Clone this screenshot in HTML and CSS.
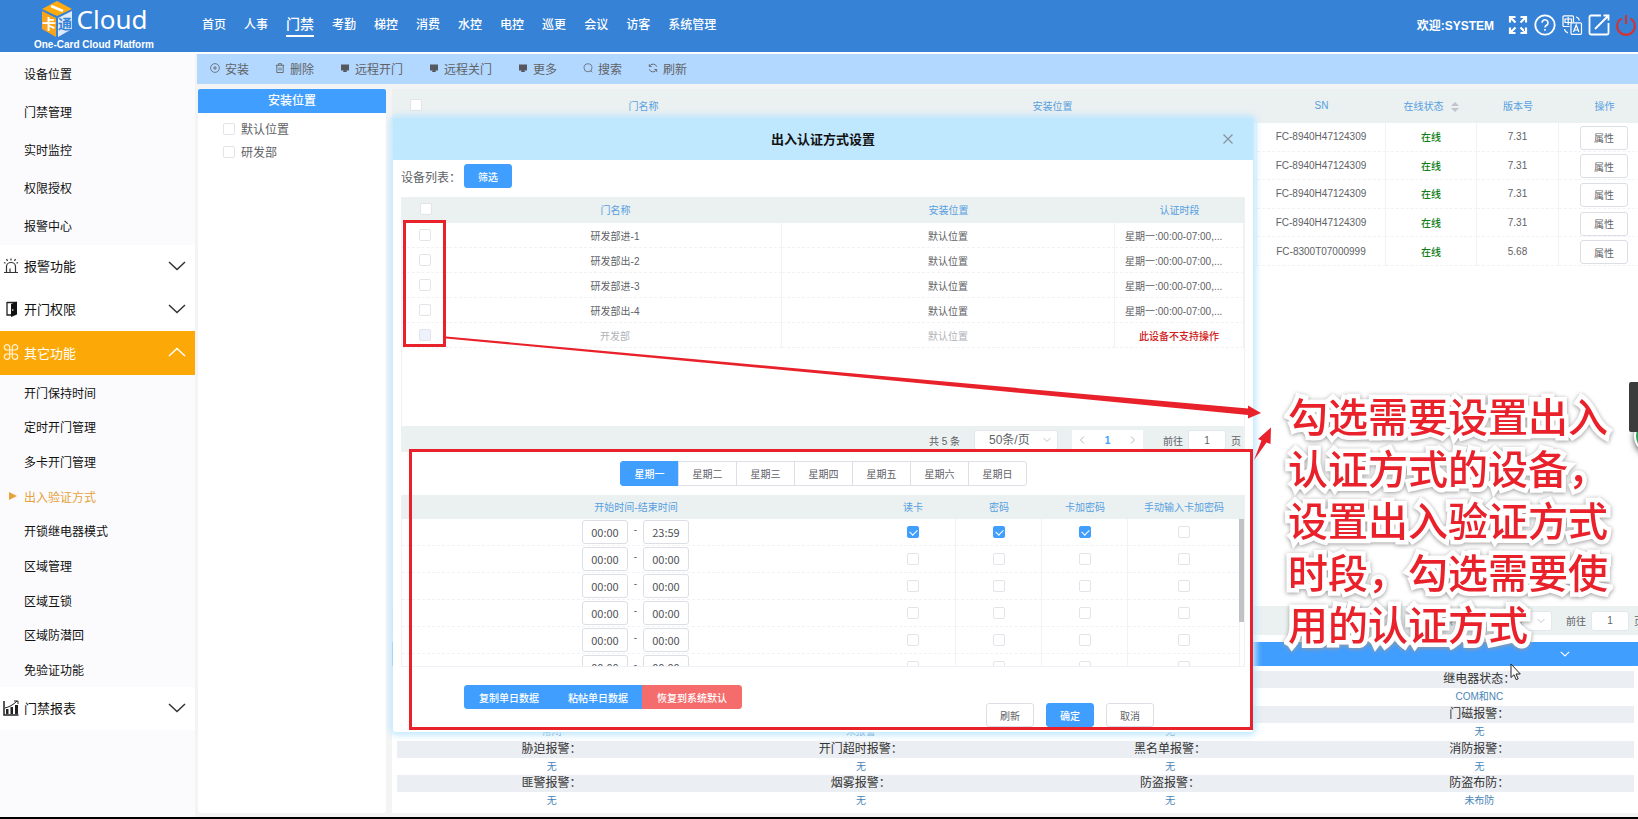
FILE: index.html
```html
<!DOCTYPE html>
<html lang="zh-CN">
<head>
    <meta charset="utf-8">
    <title>One-Card Cloud Platform</title>
    <link rel="stylesheet" href="styles.css">
</head>
<body>
    <header class="header">
        <div class="logo">
            <div class="logo-top">
                <svg width="32" height="36" viewBox="0 0 32 36">
                    <polygon points="1,8 16,0 31,8 16,15" fill="#ffab0f"/>
                    <polygon points="1,10 15,17 15,36 1,28" fill="#f9a41a"/>
                    <polygon points="17,17 31,10 31,28 17,36" fill="#dcebfb"/>
                    <path d="M10 5L22 10" stroke="#fff" stroke-width="2.500"/>
                    <text x="1" y="28" font-size="14" font-weight="700" fill="#fff">卡</text>
                    <text x="17" y="28" font-size="14" font-weight="700" fill="#3682d6">通</text>
                </svg>
                <span class="logo-name">Cloud</span>
            </div>
            <div class="logo-sub">One-Card Cloud Platform</div>
        </div>
        <nav class="nav">
            <a href="#">首页</a>
            <a href="#">人事</a>
            <a href="#" class="active">门禁</a>
            <a href="#">考勤</a>
            <a href="#">梯控</a>
            <a href="#">消费</a>
            <a href="#">水控</a>
            <a href="#">电控</a>
            <a href="#">巡更</a>
            <a href="#">会议</a>
            <a href="#">访客</a>
            <a href="#">系统管理</a>
        </nav>
        <div class="user">
            <span class="welcome">欢迎:SYSTEM</span>
            <button class="icon-btn" aria-label="全屏">
                <svg width="22" height="22" viewBox="0 0 22 22" fill="none" stroke="#fff" stroke-width="2.200">
                    <path d="M3 8.500V3h5.500M3.500 3.500l5 5M13.500 3H19v5.500M18.500 3.500l-5 5M3 13.500V19h5.500M3.500 18.500l5-5M19 13.500V19h-5.500M18.500 18.500l-5-5"/>
                </svg>
            </button>
            <button class="icon-btn" aria-label="帮助">
                <svg width="22" height="22" viewBox="0 0 22 22" fill="none" stroke="#fff" stroke-width="1.800">
                    <circle cx="11" cy="11" r="9.700"/>
                    <path d="M8 8.800a3 3 0 1 1 4.600 2.500c-1.100.7-1.600 1.100-1.600 2.200M11 15v1.800" stroke-width="1.600"/>
                </svg>
            </button>
            <button class="icon-btn" aria-label="语言">
                <svg width="22" height="22" viewBox="0 0 22 22" fill="none" stroke="#fff" stroke-width="1.200">
                    <path d="M8.500 12.500H3a1 1 0 0 1-1-1V2.800a1 1 0 0 1 1-1h8.500a1 1 0 0 1 1 1V8M4 5h6.500v3.500H4zM7.200 3v8M10 8.800h9.500a1 1 0 0 1 1 1v9.500a1 1 0 0 1-1 1H11a1 1 0 0 1-1-1zM12.500 18l2.700-7 2.700 7M13.300 16h3.800M15 3c2 .3 3 1.300 3.300 3.500M3.500 15c.3 2 1.300 3.300 3.500 3.800"/>
                </svg>
            </button>
            <button class="icon-btn" aria-label="编辑">
                <svg width="22" height="22" viewBox="0 0 22 22" fill="none" stroke="#fff" stroke-width="1.800">
                    <path d="M13 1.500H3a1.500 1.500 0 0 0-1.500 1.500v16A1.500 1.500 0 0 0 3 20.500h16a1.500 1.500 0 0 0 1.500-1.500V9M7 15L20 2M15.500 1.500h5V6.500"/>
                </svg>
            </button>
            <button class="icon-btn" aria-label="退出">
                <svg width="22" height="22" viewBox="0 0 22 22" fill="none" stroke="#d9302c" stroke-width="2">
                    <path d="M6.500 4.500a8.800 8.800 0 1 0 9 0M11 1v9"/>
                </svg>
            </button>
        </div>
    </header>

    <div class="main">
        <aside class="sidebar">
            <ul class="menu">
                <li><a href="#">设备位置</a></li>
                <li><a href="#">门禁管理</a></li>
                <li><a href="#">实时监控</a></li>
                <li><a href="#">权限授权</a></li>
                <li><a href="#">报警中心</a></li>
            </ul>
            <button class="group">
                <svg width="16" height="16" viewBox="0 0 16 16" fill="none" stroke="#333" stroke-width="1.200">
                    <path d="M1 14.500h14M3.500 14V8.500a4.500 4 0 0 1 9 0V14M7 14v-3.500M8 .5v2M3.500 1l1 2M12.500 1l-1 2M1 4.500l1.500.8M15 4.500l-1.500.8"/>
                </svg>
                <span>报警功能</span>
                <svg class="arrow" width="18" height="10" viewBox="0 0 18 10"><path d="M1 1l8 7.500L17 1"/></svg>
            </button>
            <button class="group">
                <svg width="16" height="16" viewBox="0 0 16 16">
                    <path d="M4 1.500h9M4 1v13h4" fill="none" stroke="#222" stroke-width="1.300"/>
                    <path d="M8 3l6-2.500v13L8 16z" fill="#111"/>
                    <circle cx="9.700" cy="9" r=".8" fill="#fff"/>
                </svg>
                <span>开门权限</span>
                <svg class="arrow" width="18" height="10" viewBox="0 0 18 10"><path d="M1 1l8 7.500L17 1"/></svg>
            </button>
            <button class="group open">
                <svg width="16" height="16" viewBox="0 0 16 16" fill="none" stroke="#fff3d6" stroke-width="1.200">
                    <path d="M6 6H4a2.700 2.700 0 1 1 2.700-2.700v9.400A2.700 2.700 0 1 1 4 10h8a2.700 2.700 0 1 1-2.700 2.700V3.300A2.700 2.700 0 1 1 12 6H6"/>
                </svg>
                <span>其它功能</span>
                <svg class="arrow" width="18" height="10" viewBox="0 0 18 10"><path d="M1 9l8-7.500L17 9"/></svg>
            </button>
            <ul class="menu submenu">
                <li><a href="#">开门保持时间</a></li>
                <li><a href="#">定时开门管理</a></li>
                <li><a href="#">多卡开门管理</a></li>
                <li><a href="#" class="current">出入验证方式</a></li>
                <li><a href="#">开锁继电器模式</a></li>
                <li><a href="#">区域管理</a></li>
                <li><a href="#">区域互锁</a></li>
                <li><a href="#">区域防潜回</a></li>
                <li><a href="#">免验证功能</a></li>
            </ul>
            <button class="group">
                <svg width="16" height="16" viewBox="0 0 16 16">
                    <path d="M1 1v14h14.500" fill="none" stroke="#222" stroke-width="1.500"/>
                    <path d="M3 9h2.500v5H3zM7.500 7H10v7H7.500zM12 5h3v9h-3z" fill="#222"/>
                    <path d="M2 8C6 7 10 5 14 1M11 1h4v3" fill="none" stroke="#222"/>
                </svg>
                <span>门禁报表</span>
                <svg class="arrow" width="18" height="10" viewBox="0 0 18 10"><path d="M1 1l8 7.500L17 1"/></svg>
            </button>
        </aside>

        <div class="content">
            <div class="toolbar">
                <button>
                    <svg width="10" height="10" viewBox="0 0 10 10" fill="none" stroke="#606266" stroke-width=".8"><circle cx="5" cy="5" r="4.400"/><path d="M5 3v4M3 5h4"/></svg>
                    安装
                </button>
                <button>
                    <svg width="10" height="10" viewBox="0 0 10 10" fill="none" stroke="#606266" stroke-width=".9"><path d="M.8 2.300h8.400M3.500 2V.7h3V2M1.800 2.500v7h6.400v-7M4 4.500v3M6 4.500v3"/></svg>
                    删除
                </button>
                <button>
                    <svg width="10" height="10" viewBox="0 0 10 10" fill="#55585e"><path d="M1 1.500h8v6H6.300L7 9H3l.7-1.500H1z"/></svg>
                    远程开门
                </button>
                <button>
                    <svg width="10" height="10" viewBox="0 0 10 10" fill="#55585e"><path d="M1 1.500h8v6H6.300L7 9H3l.7-1.500H1z"/></svg>
                    远程关门
                </button>
                <button>
                    <svg width="10" height="10" viewBox="0 0 10 10" fill="#55585e"><path d="M1 1.500h8v6H6.300L7 9H3l.7-1.500H1z"/></svg>
                    更多
                </button>
                <button>
                    <svg width="10" height="10" viewBox="0 0 10 10" fill="none" stroke="#606266" stroke-width=".8"><circle cx="5" cy="4.800" r="4"/><path d="M7.800 7.800l1.500 1.500"/></svg>
                    搜索
                </button>
                <button>
                    <svg width="10" height="10" viewBox="0 0 10 10" fill="none" stroke="#606266" stroke-width=".9"><path d="M1.300 6.300A3.900 3.900 0 0 0 8.500 6.700M8.700 3.700A3.900 3.900 0 0 0 1.500 3.300M1.300 1.200v2.300h2.300M8.700 8.800V6.500H6.400"/></svg>
                    刷新
                </button>
            </div>

            <div class="panels">
                <section class="tree">
                    <h2>安装位置</h2>
                    <label><input type="checkbox" class="check">默认位置</label>
                    <label><input type="checkbox" class="check">研发部</label>
                </section>

                <section class="devices">
                    <div class="device-list">
                        <table class="grid device-table">
                            <colgroup>
                                <col class="w-check"><col><col><col class="w-sn"><col class="w-state"><col class="w-version"><col class="w-action">
                            </colgroup>
                            <thead>
                                <tr>
                                    <th><input type="checkbox" class="check" aria-label="全选"></th>
                                    <th>门名称</th>
                                    <th>安装位置</th>
                                    <th>SN</th>
                                    <th>在线状态
                                        <svg class="sort" width="8" height="10" viewBox="0 0 8 10" fill="#c0c4cc"><path d="M4 0l4 4H0zM4 10l4-4H0z"/></svg>
                                    </th>
                                    <th>版本号</th>
                                    <th>操作</th>
                                </tr>
                            </thead>
                            <tbody>
                                <tr>
                                    <td><input type="checkbox" class="check" aria-label="选择"></td><td>研发部进-1</td><td>默认位置</td>
                                    <td>FC-8940H47124309</td><td class="online">在线</td><td>7.31</td><td><button class="btn">属性</button></td>
                                </tr>
                                <tr>
                                    <td><input type="checkbox" class="check" aria-label="选择"></td><td>研发部出-2</td><td>默认位置</td>
                                    <td>FC-8940H47124309</td><td class="online">在线</td><td>7.31</td><td><button class="btn">属性</button></td>
                                </tr>
                                <tr>
                                    <td><input type="checkbox" class="check" aria-label="选择"></td><td>研发部进-3</td><td>默认位置</td>
                                    <td>FC-8940H47124309</td><td class="online">在线</td><td>7.31</td><td><button class="btn">属性</button></td>
                                </tr>
                                <tr>
                                    <td><input type="checkbox" class="check" aria-label="选择"></td><td>研发部出-4</td><td>默认位置</td>
                                    <td>FC-8940H47124309</td><td class="online">在线</td><td>7.31</td><td><button class="btn">属性</button></td>
                                </tr>
                                <tr>
                                    <td><input type="checkbox" class="check" aria-label="选择"></td><td>开发部</td><td>默认位置</td>
                                    <td>FC-8300T07000999</td><td class="online">在线</td><td>5.68</td><td><button class="btn">属性</button></td>
                                </tr>
                            </tbody>
                        </table>
                    </div>

                    <div class="pagination">
                        <span>共 5 条</span>
                        <select class="page-size" aria-label="每页条数"><option>50条/页</option></select>
                        <label>前往<input type="text" class="page-input" value="1">页</label>
                    </div>

                    <div class="detail-bar">
                        <svg width="10" height="6" viewBox="0 0 10 6" fill="none" stroke="#fff" stroke-width="1.200"><path d="M.8.8L5 5 9.200.8"/></svg>
                    </div>
                    <dl class="detail">
                        <div><dt>门状态：</dt><dd>关闭</dd></div>
                        <div><dt>门锁状态：</dt><dd>未锁定</dd></div>
                        <div><dt>远程锁定：</dt><dd>无</dd></div>
                        <div><dt>继电器状态：</dt><dd>COM和NC</dd></div>
                        <div><dt>门控状态：</dt><dd>常闭</dd></div>
                        <div><dt>非法刷卡：</dt><dd>未报警</dd></div>
                        <div><dt>读卡报警：</dt><dd>无</dd></div>
                        <div><dt>门磁报警：</dt><dd>无</dd></div>
                        <div><dt>胁迫报警：</dt><dd>无</dd></div>
                        <div><dt>开门超时报警：</dt><dd>无</dd></div>
                        <div><dt>黑名单报警：</dt><dd>无</dd></div>
                        <div><dt>消防报警：</dt><dd>无</dd></div>
                        <div><dt>匪警报警：</dt><dd>无</dd></div>
                        <div><dt>烟雾报警：</dt><dd>无</dd></div>
                        <div><dt>防盗报警：</dt><dd>无</dd></div>
                        <div><dt>防盗布防：</dt><dd>未布防</dd></div>
                    </dl>
                </section>
            </div>
        </div>
    </div>
    <div class="bottom-strip"></div>

    <div class="modal" role="dialog" aria-labelledby="modal-title">
        <div class="modal-header">
            <h1 id="modal-title">出入认证方式设置</h1>
            <button class="close" aria-label="关闭">
                <svg width="10" height="10" viewBox="0 0 10 10" stroke="#8a9299" stroke-width="1.200"><path d="M.5.5l9 9M9.500.5l-9 9"/></svg>
            </button>
        </div>
        <div class="modal-body">
            <div class="filter">
                <span>设备列表：</span>
                <button class="btn primary">筛选</button>
            </div>
            <div class="door-list">
                <table class="grid door-table">
                    <colgroup><col class="w-check"><col><col><col class="w-period"></colgroup>
                    <thead>
                        <tr>
                            <th><input type="checkbox" class="check" aria-label="全选"></th>
                            <th>门名称</th><th>安装位置</th><th>认证时段</th>
                        </tr>
                    </thead>
                    <tbody>
                        <tr><td><input type="checkbox" class="check" aria-label="研发部进-1"></td><td>研发部进-1</td><td>默认位置</td><td class="period">星期一:00:00-07:00,...</td></tr>
                        <tr><td><input type="checkbox" class="check" aria-label="研发部出-2"></td><td>研发部出-2</td><td>默认位置</td><td class="period">星期一:00:00-07:00,...</td></tr>
                        <tr><td><input type="checkbox" class="check" aria-label="研发部进-3"></td><td>研发部进-3</td><td>默认位置</td><td class="period">星期一:00:00-07:00,...</td></tr>
                        <tr><td><input type="checkbox" class="check" aria-label="研发部出-4"></td><td>研发部出-4</td><td>默认位置</td><td class="period">星期一:00:00-07:00,...</td></tr>
                        <tr class="disabled"><td><input type="checkbox" class="check" aria-label="开发部" disabled></td><td>开发部</td><td>默认位置</td><td class="unsupported">此设备不支持操作</td></tr>
                    </tbody>
                </table>
            </div>
            <div class="pagination">
                <span>共 5 条</span>
                <select class="page-size" aria-label="每页条数"><option>50条/页</option></select>
                <div class="pager">
                    <button aria-label="上一页"><svg width="6" height="8" viewBox="0 0 6 8"><path d="M5 .5L1.500 4 5 7.500"/></svg></button>
                    <button class="page-on">1</button>
                    <button aria-label="下一页"><svg width="6" height="8" viewBox="0 0 6 8"><path d="M1 .5L4.500 4 1 7.500"/></svg></button>
                </div>
                <label>前往<input type="text" class="page-input" value="1">页</label>
            </div>

            <div class="weekdays">
                <button class="on">星期一</button>
                <button>星期二</button>
                <button>星期三</button>
                <button>星期四</button>
                <button>星期五</button>
                <button>星期六</button>
                <button>星期日</button>
            </div>

            <div class="time-list">
                <table class="grid time-table">
                    <colgroup><col><col class="w-mode"><col class="w-mode"><col class="w-mode"><col class="w-manual"></colgroup>
                    <thead>
                        <tr><th>开始时间-结束时间</th><th>读卡</th><th>密码</th><th>卡加密码</th><th>手动输入卡加密码</th></tr>
                    </thead>
                    <tbody>
                        <tr>
                            <td><input class="time" value="00:00" aria-label="开始时间"><span class="dash">-</span><input class="time" value="23:59" aria-label="结束时间"></td>
                            <td><input type="checkbox" class="check" aria-label="读卡" checked></td>
                            <td><input type="checkbox" class="check" aria-label="密码" checked></td>
                            <td><input type="checkbox" class="check" aria-label="卡加密码" checked></td>
                            <td><input type="checkbox" class="check" aria-label="手动输入卡加密码"></td>
                        </tr>
                        <tr>
                            <td><input class="time" value="00:00" aria-label="开始时间"><span class="dash">-</span><input class="time" value="00:00" aria-label="结束时间"></td>
                            <td><input type="checkbox" class="check" aria-label="读卡"></td>
                            <td><input type="checkbox" class="check" aria-label="密码"></td>
                            <td><input type="checkbox" class="check" aria-label="卡加密码"></td>
                            <td><input type="checkbox" class="check" aria-label="手动输入卡加密码"></td>
                        </tr>
                        <tr>
                            <td><input class="time" value="00:00" aria-label="开始时间"><span class="dash">-</span><input class="time" value="00:00" aria-label="结束时间"></td>
                            <td><input type="checkbox" class="check" aria-label="读卡"></td>
                            <td><input type="checkbox" class="check" aria-label="密码"></td>
                            <td><input type="checkbox" class="check" aria-label="卡加密码"></td>
                            <td><input type="checkbox" class="check" aria-label="手动输入卡加密码"></td>
                        </tr>
                        <tr>
                            <td><input class="time" value="00:00" aria-label="开始时间"><span class="dash">-</span><input class="time" value="00:00" aria-label="结束时间"></td>
                            <td><input type="checkbox" class="check" aria-label="读卡"></td>
                            <td><input type="checkbox" class="check" aria-label="密码"></td>
                            <td><input type="checkbox" class="check" aria-label="卡加密码"></td>
                            <td><input type="checkbox" class="check" aria-label="手动输入卡加密码"></td>
                        </tr>
                        <tr>
                            <td><input class="time" value="00:00" aria-label="开始时间"><span class="dash">-</span><input class="time" value="00:00" aria-label="结束时间"></td>
                            <td><input type="checkbox" class="check" aria-label="读卡"></td>
                            <td><input type="checkbox" class="check" aria-label="密码"></td>
                            <td><input type="checkbox" class="check" aria-label="卡加密码"></td>
                            <td><input type="checkbox" class="check" aria-label="手动输入卡加密码"></td>
                        </tr>
                        <tr>
                            <td><input class="time" value="00:00" aria-label="开始时间"><span class="dash">-</span><input class="time" value="00:00" aria-label="结束时间"></td>
                            <td><input type="checkbox" class="check" aria-label="读卡"></td>
                            <td><input type="checkbox" class="check" aria-label="密码"></td>
                            <td><input type="checkbox" class="check" aria-label="卡加密码"></td>
                            <td><input type="checkbox" class="check" aria-label="手动输入卡加密码"></td>
                        </tr>
                    </tbody>
                </table>
                <div class="scroll-thumb"></div>
            </div>

            <div class="modal-footer">
                <div class="copy-group">
                    <button class="btn primary">复制单日数据</button>
                    <button class="btn primary">粘帖单日数据</button>
                    <button class="btn danger">恢复到系统默认</button>
                </div>
                <div class="actions">
                    <button class="btn">刷新</button>
                    <button class="btn primary">确定</button>
                    <button class="btn">取消</button>
                </div>
            </div>
        </div>
    </div>

    <!-- help marks drawn over the page -->
    <div class="mark mark-checks"></div>
    <div class="mark mark-times"></div>
    <svg class="mark-arrows" width="840" height="140" viewBox="440 330 840 140" fill="#e8212a">
        <path d="M446 336.500L820 370.500 1248 408.500V405.500L1261 413 1248 418.500V415L820 373.500 446 338.500z"/>
        <path d="M1254 460L1261.500 440.500 1258 439 1271 427.500 1270.500 444 1266.500 442.500z"/>
    </svg>
    <p class="note">勾选需要设置出入<br>认证方式的设备，<br>设置出入验证方式<br>时段，勾选需要使<br>用的认证方式</p>
    <svg class="cursor" width="12" height="18" viewBox="0 0 12 18"><path d="M1 1v13.500l3-2.800 2.200 5 2-.9-2.200-4.800h4.300z" fill="#fff" stroke="#222"/></svg>
    <div class="float-ball"></div>
    <div class="float-tab"></div>
</body>
</html>
```
FILE: styles.css
```css
* {
    box-sizing: border-box;
}
body {
    margin: 0;
    height: 100vh;
    display: flex;
    flex-direction: column;
    position: relative;
    overflow: hidden;
    background: #f4f4f5;
    color: #606266;
    font-family: "Liberation Sans", "Noto Sans CJK SC", sans-serif;
    font-size: 12px;
}
button, input, select {
    font-family: inherit;
    font-size: inherit;
    color: inherit;
    margin: 0;
}
button {
    border: 0;
    padding: 0;
    background: none;
}
a {
    color: inherit;
    text-decoration: none;
}
h1, h2, ul, dl, dd, p {
    margin: 0;
    padding: 0;
}
svg {
    flex: none;
}

/* header */
.header {
    display: flex;
    height: 52px;
    background: #3682d6;
    color: #fff;
}
.logo {
    width: 188px;
    text-align: center;
}
.logo-top {
    display: flex;
    justify-content: center;
    align-items: center;
    gap: 4px;
    height: 38px;
}
.logo-name {
    font-family: "Noto Sans", sans-serif;
    font-size: 26px;
    line-height: 38px;
}
.logo-sub {
    font-size: 10px;
    font-weight: bold;
    line-height: 14px;
}
.nav {
    display: flex;
    align-items: center;
    gap: 18px;
    padding: 0 0 6px 14px;
    font-weight: 500;
}
.nav .active {
    border-bottom: 2px solid #fff;
    font-size: 14px;
    line-height: 22px;
    margin-top: 3px;
}
.user {
    display: flex;
    align-items: center;
    gap: 5px;
    margin-left: auto;
    padding: 0 1px 3px 0;
}
.welcome {
    font-weight: bold;
    margin-right: 8px;
}
.icon-btn {
    display: flex;
}

.main {
    flex: 1;
    display: flex;
    min-height: 0;
    border-top: 2px solid #fff;
}

/* sidebar */
.sidebar {
    width: 195px;
    background: #fbfbfd;
    color: #111;
}
.menu {
    list-style: none;
    display: grid;
    height: 191px;
    grid-auto-rows: 1fr;
}
.menu li {
    display: flex;
    align-items: center;
    padding-left: 24px;
}
.submenu {
    height: 312px;
}
.current {
    display: flex;
    align-items: center;
    gap: 7px;
    margin-left: -15px;
    color: #e6a23c;
}
.current::before {
    content: "";
    border-left: 8px solid #e6a23c;
    border-top: 4px solid transparent;
    border-bottom: 4px solid transparent;
}
.group {
    display: flex;
    align-items: center;
    gap: 5px;
    width: 100%;
    height: 43px;
    padding: 0 9px 2px 3px;
    background: #fff;
    font-size: 13px;
}
.group.open {
    height: 44px;
    background: #fca908;
    color: #fff;
}
.arrow {
    margin-left: auto;
    fill: none;
    stroke: #333;
    stroke-width: 1.5;
}
.open .arrow {
    stroke: #fff;
}

/* content */
.content {
    flex: 1;
    min-width: 0;
    display: flex;
    flex-direction: column;
    padding-left: 2px;
}
.toolbar {
    display: flex;
    gap: 26px;
    height: 30px;
    padding: 0 0 2px 13px;
    background: #b3d8ff;
}
.toolbar button {
    display: flex;
    align-items: center;
    gap: 5px;
}
.panels {
    flex: 1;
    min-height: 0;
    display: flex;
    gap: 6px;
    padding: 5px 0 4px 1px;
    margin-right: -12px;
}
.tree {
    width: 188px;
    background: #fff;
    border-radius: 3px;
}
.tree h2 {
    height: 24px;
    margin-bottom: 4px;
    background: #409eff;
    border-radius: 2px 2px 0 0;
    color: #fff;
    font-size: 12px;
    font-weight: 500;
    line-height: 25px;
    text-align: center;
}
.tree label {
    display: flex;
    align-items: center;
    gap: 6px;
    height: 23px;
    padding-left: 25px;
}
.devices {
    flex: 1;
    display: flex;
    flex-direction: column;
    min-width: 0;
    background: #fff;
}
.device-list {
    flex: 1;
}

/* tables */
.grid {
    width: 100%;
    table-layout: fixed;
    border-collapse: separate;
    border-spacing: 0;
    font-size: 10px;
    text-align: center;
}
.grid th {
    background: #ebf0f1;
    color: #569fe0;
    font-weight: normal;
    padding: 0 0 2px;
}
.grid td {
    padding: 0;
    border-bottom: 1px dashed #f0f2f5;
    border-right: 1px solid #f0f2f5;
}
.grid td:first-child {
    border-right-color: transparent;
}
.w-check {
    width: 47px;
}
.w-sn {
    width: 129px;
}
.w-state {
    width: 91px;
}
.w-version {
    width: 82px;
}
.w-action {
    width: 91px;
}
.w-period {
    width: 129px;
}
.w-mode {
    width: 86px;
}
.w-manual {
    width: 112px;
}
.device-table {
    height: 177px;
}
.device-table thead tr {
    height: 34px;
}
.device-table .btn {
    display: block;
    margin: 2px auto 0;
}
.grid .online {
    color: #0e7d16;
    font-weight: 500;
}
.grid .time {
    color: #505256;
}
.sort {
    margin-left: 5px;
    vertical-align: middle;
}
.check {
    appearance: none;
    display: inline-block;
    width: 12px;
    height: 12px;
    border: 1px solid #e2e4e9;
    border-radius: 2px;
    background: #fff;
    vertical-align: middle;
    position: relative;
}
.check:disabled {
    background: #edf2fc;
}
.check:checked {
    background: #409eff;
    border-color: #409eff;
}
.check:checked::after {
    content: "";
    position: absolute;
    left: 3px;
    top: 1px;
    width: 4px;
    height: 6px;
    border: solid #fff;
    border-width: 0 1px 1px 0;
    transform: rotate(45deg);
}

/* buttons */
.btn {
    height: 24px;
    min-width: 48px;
    padding: 0 12px;
    background: #fff;
    border: 1px solid #dcdfe6;
    border-radius: 3px;
    font-size: 10px;
}
.primary {
    background: #409eff;
    border-color: #409eff;
    color: #fff;
    font-weight: 500;
}
.danger {
    background: #f56c6c;
    border-color: #f56c6c;
    color: #fff;
    font-weight: 500;
}

/* pagination */
.pagination {
    display: flex;
    justify-content: flex-end;
    align-items: center;
    gap: 14px;
    background: #ebf0f1;
    font-size: 10px;
}
.pagination label {
    display: flex;
    align-items: center;
    gap: 5px;
}
.page-size {
    appearance: none;
    width: 84px;
    height: 20px;
    padding: 0 14px;
    border: 1px solid #e4e7ed;
    border-radius: 3px;
    background: #fff url("data:image/svg+xml,%3Csvg xmlns='http://www.w3.org/2000/svg' width='8' height='6' fill='none' stroke='%23c0c4cc'%3E%3Cpath d='M.5 1L4 4.500 7.500 1'/%3E%3C/svg%3E") no-repeat right 6px center;
    font-size: 12px;
}
.page-input {
    width: 38px;
    height: 20px;
    border: 1px solid #e4e7ed;
    border-radius: 3px;
    text-align: center;
}
.pager {
    display: flex;
    height: 20px;
    background: #fff;
    margin-right: 6px;
}
.pager button {
    display: flex;
    align-items: center;
    justify-content: center;
    width: 20px;
}
.pager .page-on {
    width: 31px;
    color: #409eff;
    font-weight: bold;
}
.pager path {
    fill: none;
    stroke: #b4b8c0;
}
.devices > .pagination {
    height: 29px;
    padding-right: 6px;
}

/* door detail */
.detail-bar {
    display: flex;
    align-items: center;
    justify-content: flex-end;
    height: 24px;
    margin: 7px 0 5px;
    padding-right: 80px;
    background: #409eff;
}
.detail {
    display: grid;
    grid-template-columns: repeat(4, 1fr);
    grid-auto-rows: 1fr;
    height: 139px;
    margin: 0 16px 3px 5px;
    text-align: center;
    line-height: 17px;
}
.detail dt {
    background: #ebeef2;
    color: #333;
}
.detail dd {
    color: #4a86b8;
    font-size: 10px;
}
.bottom-strip {
    height: 2px;
    background: #000;
}

/* modal */
.modal {
    position: absolute;
    top: 118px;
    left: 393px;
    right: 385px;
    background: #fff;
    border-radius: 3px;
    box-shadow: 0 0 6px 3px #bfe7fe;
}
.modal-header {
    position: relative;
    height: 42px;
    background: #bfe7fe;
}
.modal-header h1 {
    color: #111;
    font-size: 13px;
    line-height: 43px;
    text-align: center;
}
.close {
    position: absolute;
    top: 16px;
    right: 20px;
    display: flex;
}
.modal-body {
    padding: 0 8px;
}
.filter {
    display: flex;
    align-items: center;
    gap: 3px;
    padding: 4px 0 9px;
}
.door-list {
    height: 229px;
    border: solid #eef1f5;
    border-width: 0 1px;
}
.door-table tr {
    height: 25px;
}
.door-table thead tr {
    height: 26px;
}
.door-table .period {
    padding-left: 10px;
    text-align: left;
}
.disabled {
    color: #b0b3b8;
}
.door-table .unsupported {
    color: #d02020;
    font-weight: 500;
}
.modal .pagination {
    height: 26px;
    padding: 2px 4px 0 0;
}
.weekdays {
    display: flex;
    justify-content: center;
    padding: 9px 0;
}
.weekdays button {
    width: 59px;
    height: 25px;
    margin-right: -1px;
    border: 1px solid #dcdfe6;
    font-size: 10px;
}
.weekdays button:first-child {
    border-radius: 3px 0 0 3px;
}
.weekdays button:last-child {
    border-radius: 0 3px 3px 0;
}
.weekdays .on {
    background: #409eff;
    border-color: #409eff;
    color: #fff;
    font-weight: 500;
}
.time-list {
    position: relative;
    height: 172px;
    padding-right: 4px;
    overflow: hidden;
    border: 1px solid #eef1f5;
    border-top: 0;
    background: linear-gradient(#ebf0f1 24px, #fff 24px);
}
.time-table tr {
    height: 27px;
}
.time-table thead tr {
    height: 24px;
}
.time {
    width: 46px;
    height: 24px;
    border: 1px solid #dcdfe6;
    border-radius: 3px;
    font-family: "Noto Sans CJK SC", sans-serif;
    font-size: 11px;
    text-align: center;
    vertical-align: middle;
}
.dash {
    display: inline-block;
    width: 15px;
    vertical-align: 2px;
}
.scroll-thumb {
    position: absolute;
    top: 24px;
    right: 0;
    width: 5px;
    height: 103px;
    background: #c1c2c6;
}
.modal-footer {
    display: flex;
    justify-content: space-between;
    align-items: flex-start;
    padding: 18px 91px 5px 63px;
}
.copy-group {
    display: flex;
}
.copy-group .btn {
    margin-right: -1px;
    padding: 0 14px;
    border-radius: 0;
}
.copy-group .btn:first-child {
    border-radius: 3px 0 0 3px;
}
.copy-group .btn:last-child {
    border-radius: 0 3px 3px 0;
}
.actions {
    display: flex;
    gap: 12px;
    padding-top: 18px;
}

/* help marks */
.mark {
    position: absolute;
    border: 3px solid #e8212a;
    pointer-events: none;
}
.mark-checks {
    top: 220px;
    left: 403px;
    width: 43px;
    height: 127px;
}
.mark-times {
    top: 449px;
    left: 409px;
    right: 385px;
    height: 281px;
}
.mark-arrows {
    position: absolute;
    top: 330px;
    left: 440px;
    pointer-events: none;
}
.note {
    position: absolute;
    top: 389px;
    left: 1288px;
    color: #e8212a;
    font-family: "Noto Sans CJK SC", sans-serif;
    font-size: 40px;
    font-weight: 500;
    line-height: 52px;
    white-space: nowrap;
    -webkit-text-stroke: 9px #fff;
    paint-order: stroke fill;
    filter: drop-shadow(0 1px 2px #999);
}
.cursor {
    position: absolute;
    top: 663px;
    left: 1510px;
}
.float-ball {
    position: absolute;
    top: 418px;
    right: -32px;
    width: 36px;
    height: 36px;
    border: 2px solid #fff;
    border-radius: 50%;
    background: #2f9e5b;
    box-shadow: 0 2px 6px #555;
}
.float-tab {
    position: absolute;
    top: 382px;
    right: 0;
    width: 9px;
    height: 50px;
    border-radius: 2px 0 0 2px;
    background: #3c3c3c;
}
```
